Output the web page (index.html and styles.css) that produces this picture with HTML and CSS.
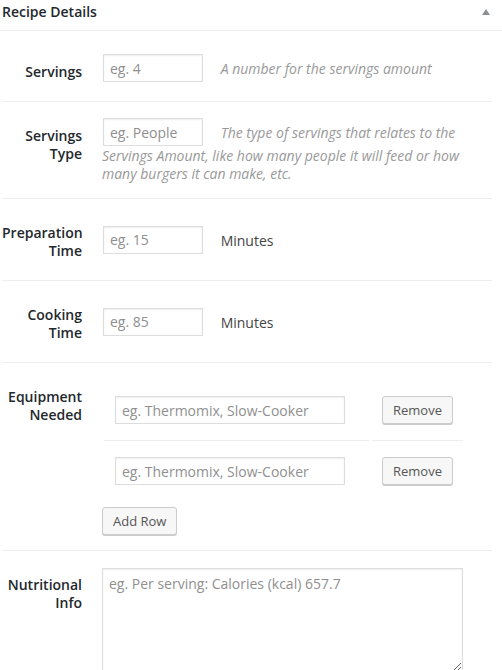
FILE: index.html
```html
<!DOCTYPE html>
<html>
<head>
<meta charset="utf-8">
<link rel="stylesheet" href="styles.css">
</head>
<body>
<div class="postbox">
  <div class="hndle">
    <span class="title">Recipe Details</span>
    <span class="toggle"></span>
  </div>
  <div class="form">
    <div class="field">
      <div class="label">Servings</div>
      <div class="value"><input class="text" type="text" placeholder="eg. 4"> <span class="desc">A number for the servings amount</span></div>
    </div>
    <div class="field">
      <div class="label">Servings Type</div>
      <div class="value"><input class="text" type="text" placeholder="eg. People"> <span class="desc">The type of servings that relates to the Servings Amount, like how many people it will feed or how many burgers it can make, etc.</span></div>
    </div>
    <div class="field field--middle">
      <div class="label">Preparation Time</div>
      <div class="value"><input class="text" type="text" placeholder="eg. 15"> <span class="unit">Minutes</span></div>
    </div>
    <div class="field field--middle">
      <div class="label">Cooking Time</div>
      <div class="value"><input class="text" type="text" placeholder="eg. 85"> <span class="unit">Minutes</span></div>
    </div>
    <div class="field">
      <div class="label">Equipment Needed</div>
      <div class="value value--equip">
        <div class="repeater">
          <div class="cell cell--input"><input class="text text--wide" type="text" placeholder="eg. Thermomix, Slow-Cooker"></div>
          <div class="cell cell--btn"><button class="button" type="button">Remove</button></div>
          <div class="cell cell--input cell--last"><input class="text text--wide" type="text" placeholder="eg. Thermomix, Slow-Cooker"></div>
          <div class="cell cell--btn cell--last"><button class="button" type="button">Remove</button></div>
        </div>
        <button class="button button--add" type="button">Add Row</button>
      </div>
    </div>
    <div class="field field--last">
      <div class="label">Nutritional Info</div>
      <div class="value"><textarea class="area" placeholder="eg. Per serving: Calories (kcal) 657.7"></textarea></div>
    </div>
  </div>
</div>
</body>
</html>
```

FILE: styles.css
```css
* { box-sizing: border-box; }

body {
  margin: 0;
  background: #fff;
  font-family: "Open Sans", "Noto Sans", sans-serif;
  font-size: 14px;
  color: #23282d;
}

.hndle {
  display: flex;
  justify-content: space-between;
  align-items: flex-start;
  height: 31px;
  padding: 2px 12px 0 2px;
  border-bottom: 1px solid #eee;
}

.title {
  font-size: 14px;
  font-weight: 600;
  line-height: 1.4;
}

.toggle {
  width: 0;
  height: 0;
  margin-top: 7px;
  border-left: 4px solid transparent;
  border-right: 4px solid transparent;
  border-bottom: 6px solid #8c8f94;
}

.form {
  margin: 7px 10px 0 2px;
}

.field {
  display: grid;
  grid-template-columns: 90px 1fr;
  border-bottom: 1px solid #eee;
}

.field--last { border-bottom: none; }

.label {
  padding: 25px 10px 20px 0;
  text-align: right;
  font-weight: 600;
  line-height: 18px;
}

.value {
  padding: 15px 10px;
  line-height: 18px;
}

.field--middle .value { align-self: center; }

.text {
  width: 100px;
  height: 28px;
  margin: 1px 14px 1px 1px;
  padding: 3px 6px;
  border: 1px solid #ddd;
  box-shadow: inset 0 1px 2px rgba(0,0,0,.07);
  font-family: inherit;
  font-size: 14px;
  color: #32373c;
  background: #fff;
  vertical-align: baseline;
}

.text::placeholder, .area::placeholder { color: #8f8f8f; opacity: 1; }

.text--wide { width: 230px; margin-right: 0; }

.desc {
  font-style: italic;
  color: #999;
}

.unit { color: #444; }

.value--equip { padding-bottom: 14px; }

.repeater {
  display: grid;
  grid-template-columns: 266px 91px;
  column-gap: 2px;
  row-gap: 0;
  padding: 2px;
  width: max-content;
}

.cell {
  display: flex;
  align-items: flex-start;
  padding: 15px 10px;
  border-bottom: 1px solid #eee;
}

.cell--last { border-bottom: none; }

.button {
  height: 28px;
  margin: 1px 0;
  padding: 0 10px 2px;
  border: 1px solid #ccc;
  border-radius: 3px;
  background: #f7f7f7;
  box-shadow: 0 1px 0 #ccc;
  color: #555;
  font-family: inherit;
  font-size: 13px;
  line-height: 26px;
}

.button--add {
  display: block;
  margin-top: 4px;
}

.area {
  display: block;
  width: 361px;
  height: 104px;
  margin-top: 2px;
  padding: 5px 6px;
  border: 1px solid #ddd;
  box-shadow: inset 0 1px 2px rgba(0,0,0,.07);
  font-family: inherit;
  font-size: 14px;
  line-height: 1.4;
  resize: both;
}
```
